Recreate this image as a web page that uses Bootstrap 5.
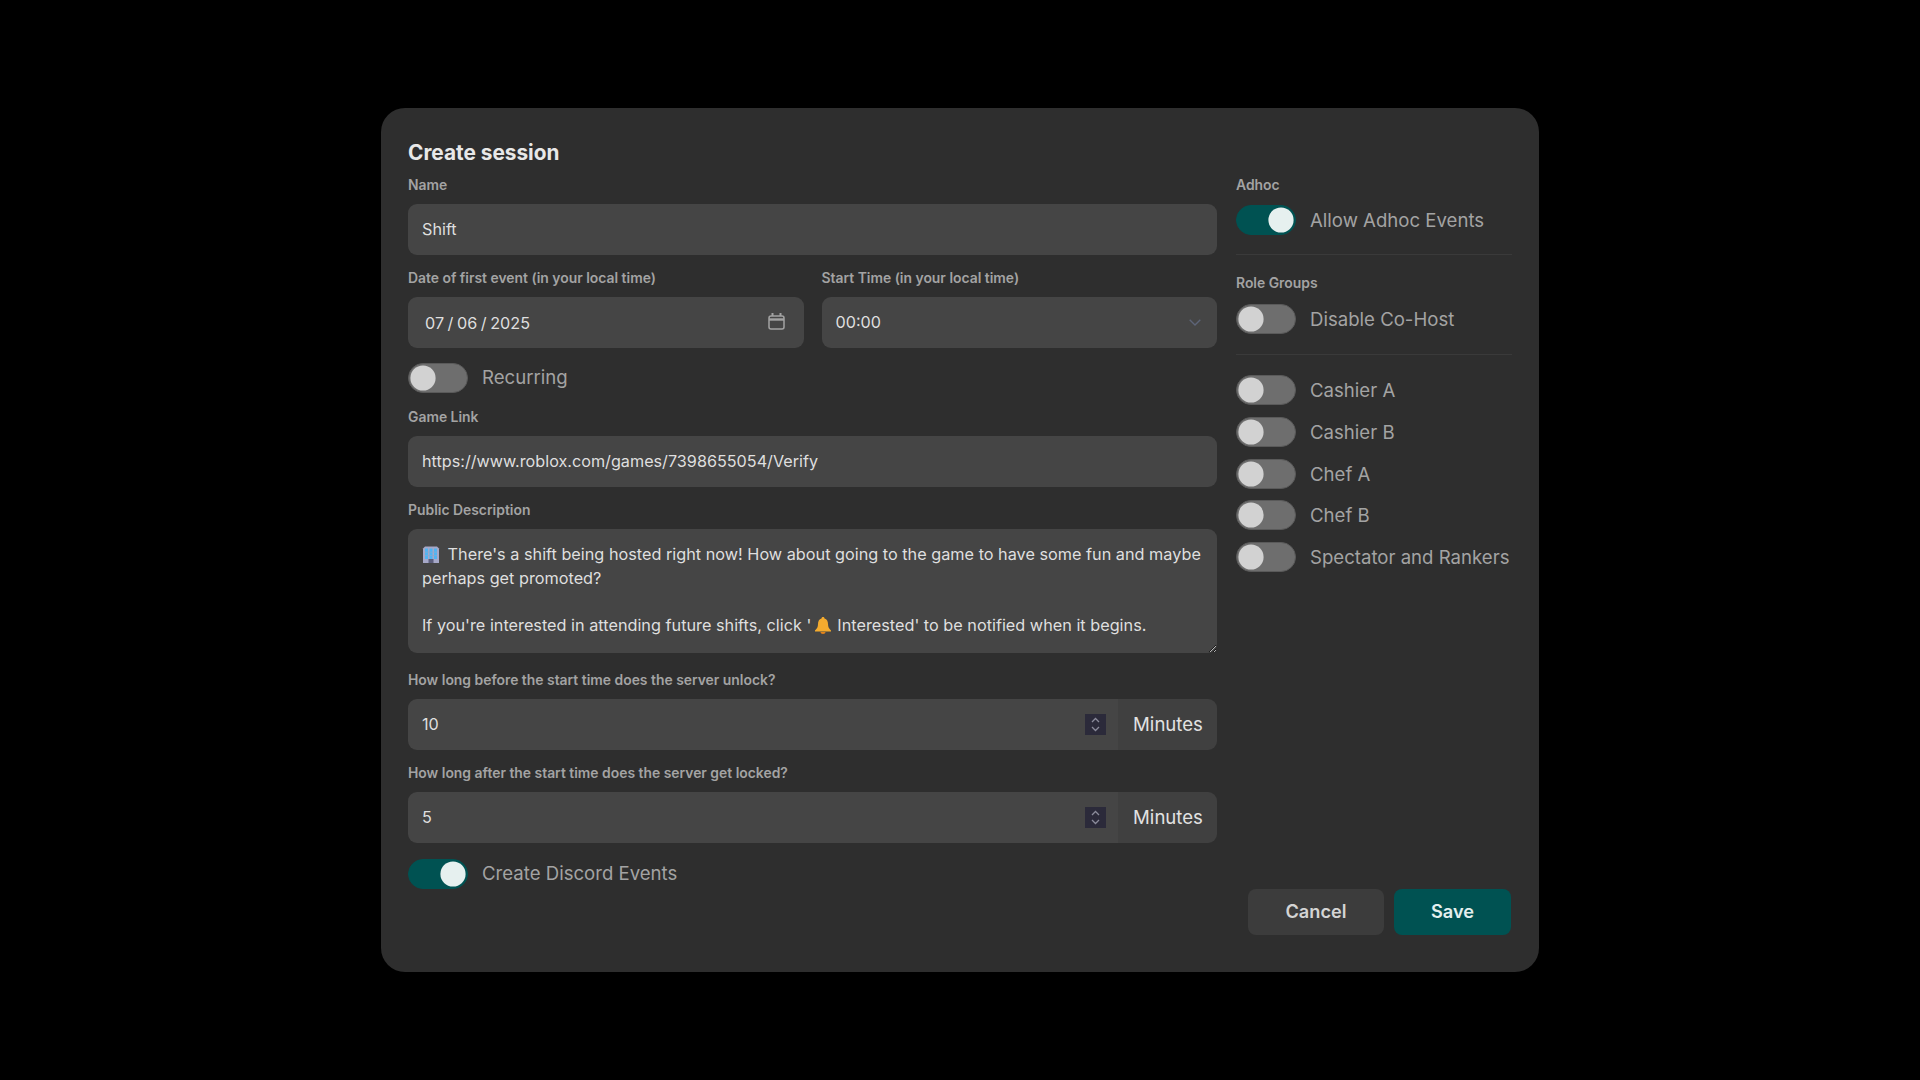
<!DOCTYPE html>
<html lang="en">
<head>
<meta charset="utf-8">
<title>Create session</title>
<link rel="stylesheet" href="https://cdn.jsdelivr.net/npm/bootstrap@5.3.0/dist/css/bootstrap.min.css">
<style>
html,body{height:100%}
body{background:#000;font-family:Inter,"Liberation Sans",sans-serif;color:#e2e2e2}
.sess-shell{min-height:100vh}
.sess-modal{width:1158px;height:864px;background:#2e2e2e;border-radius:24px;padding:31px 27px 36px}
.sess-title{font-size:20.8px;line-height:28px;font-weight:700;color:#e8e8e8;margin:0 0 8px}
.sess-main{width:809px}
.sess-side{width:276px}
.sess-half{flex:1 1 0}
.sess-label{display:block;font-size:13.9px;line-height:20px;font-weight:600;color:#a3a3a3;margin:0 0 9px}
.sess-label-side{margin-bottom:10px}
.sess-label-role{margin-bottom:11px}
.sess-field{margin-bottom:13px}
.sess-modal .form-control,.sess-modal .form-select{height:51px;background-color:#454545;border:0;border-radius:9px;color:#dfdfdf;font-size:16.2px;line-height:23px;padding:0 14px;box-shadow:none}
.sess-modal input.form-control{padding-bottom:2px}
.sess-modal .form-select{background-image:url("data:image/svg+xml,%3csvg xmlns='http://www.w3.org/2000/svg' viewBox='0 0 12 7'%3e%3cpath fill='none' stroke='%235d6478' stroke-width='1.4' d='M.7.7 6 6 11.3.7'/%3e%3c/svg%3e");background-size:12px 7px;background-position:right 16px center}
.sess-modal input.sess-date{padding-left:17px;padding-bottom:0;word-spacing:-1px}
.sess-cal{position:absolute;right:19px;top:16px;width:17px;height:17px}
.sess-descr{height:124px!important;padding:14px 14px 0!important;overflow:hidden;resize:vertical;white-space:normal;font-size:16.25px!important;line-height:23.5px!important}
.sess-descr svg{vertical-align:-3px}
.sess-building{margin-right:3px}
.sess-bell{margin:0 5px 0 3px}
.sess-descr p{margin:0}
.sess-gap{height:23.5px}
.sess-modal .input-group-text{width:100px;justify-content:center;background:#404040;border:0;color:#e2e2e2;font-size:18.6px;padding:0 0 0 2px;border-radius:0 9px 9px 0}
.sess-num{border-radius:9px 0 0 9px!important}
.sess-spin{position:absolute;right:12px;top:15px;width:21px;height:21px;background:#2b2a3a}
.sess-modal .form-switch{display:flex;align-items:center;gap:14px;min-height:30px;margin:0;padding:0}
.sess-modal .form-switch .form-check-input{width:60px;height:30px;margin:0;float:none;flex:none;background-color:#6e6e6e;border:1px solid #5a5a5a;border-radius:15px;box-shadow:none;background-size:auto 100%;background-image:url("data:image/svg+xml,%3csvg xmlns='http://www.w3.org/2000/svg' viewBox='-4 -4 8 8'%3e%3ccircle r='3.6' fill='%23d2d2d2'/%3e%3c/svg%3e")}
.sess-modal .form-switch .form-check-input:checked{background-color:#005252;border-color:#005252;background-image:url("data:image/svg+xml,%3csvg xmlns='http://www.w3.org/2000/svg' viewBox='-4 -4 8 8'%3e%3ccircle r='3.6' fill='%23e6f0ef'/%3e%3c/svg%3e")}
.sess-modal .form-check-label{font-size:18.6px;line-height:30px;color:#a3a3a3;opacity:1!important}
.sess-modal .sess-lift{margin-top:-2px}
.sess-switch-main{margin-top:15px!important;margin-bottom:14px!important}
.sess-rule{margin:0;border-color:#3a3a3a;opacity:1}
.sess-rule-a{margin:19px 0 18px}
.sess-rule-b{margin:20px 0 20px}
.sess-roles{gap:11.8px}
.sess-col-gap{gap:19px}
.sess-half-gap{gap:18px}
.sess-after-descr{margin-bottom:17px}
.sess-btn{height:46px;font-size:18.2px;font-weight:600;border:0;border-radius:8px;padding:0}
.sess-cancel{width:136px;background:#3c3c3c;color:#d4d4d4}
.sess-save{width:117px;background:#005252;color:#e3efee}
.sess-foot{gap:10px;margin-top:0;padding-right:1px}
</style>
</head>
<body>
<div class="sess-shell d-flex align-items-center justify-content-center">
<div class="sess-modal d-flex flex-column">
  <h1 class="sess-title">Create session</h1>
  <div class="d-flex sess-col-gap">
    <div class="sess-main">
      <div class="sess-field">
        <label class="sess-label">Name</label>
        <input class="form-control" type="text" value="Shift">
      </div>
      <div class="d-flex sess-half-gap">
        <div class="sess-half">
          <label class="sess-label">Date of first event (in your local time)</label>
          <div class="position-relative">
            <input class="form-control sess-date" type="text" value="07 / 06 / 2025">
            <svg class="sess-cal" viewBox="0 0 17 17" fill="none" stroke="#a2a2a2" stroke-width="1.5"><rect x="1" y="3" width="15" height="13" rx="2"/><path d="M1 6.500h15" stroke-width="2.400"/><path d="M4.500 0v3M12.500 0v3" stroke-width="2"/></svg>
          </div>
        </div>
        <div class="sess-half">
          <label class="sess-label">Start Time (in your local time)</label>
          <select class="form-select"><option>00:00</option></select>
        </div>
      </div>
      <div class="form-check form-switch sess-switch-main">
        <input class="form-check-input" type="checkbox" role="switch" id="s1">
        <label class="form-check-label sess-lift" for="s1">Recurring</label>
      </div>
      <div class="sess-field">
        <label class="sess-label">Game Link</label>
        <input class="form-control" type="text" value="https://www.roblox.com/games/7398655054/Verify">
      </div>
      <div class="sess-after-descr">
        <label class="sess-label">Public Description</label>
        <div class="form-control sess-descr">
          <p><svg class="sess-building" width="18" height="17" viewBox="0 0 18 17"><path fill="#a6a8c8" d="M1 2.500 3 .5h12l2 2V17H1z"/><path fill="#50b4f2" d="M3 2.500h3V13H3zM7.500 2.500h3V13h-3zM12 2.500h3V13h-3z"/><path fill="#85a9cf" d="M3 5.700h12v.7H3zM3 9.200h12v.7H3z"/><path fill="#5c5e7c" d="M6.500 13h5v4h-5z"/></svg> There's a shift being hosted right now! How about going to the game to have some fun and maybe perhaps get promoted?</p>
          <div class="sess-gap"></div>
          <p>If you're interested in attending future shifts, click '<svg class="sess-bell" width="18" height="17" viewBox="0 0 18 17"><path fill="#f4ab2f" d="M9 0c1 0 1.500.700 1.500 1.500C13 2.300 14 4.500 14 7c0 3 1 4.500 3 6.500V14.500H1V13.500C3 11.500 4 10 4 7c0-2.500 1-4.700 3.500-5.500C7.500.700 8 0 9 0z"/><path fill="#e2831b" d="M6.500 15h5c0 1.200-1.100 2-2.500 2s-2.500-.800-2.500-2z"/></svg>Interested' to be notified when it begins.</p>
        </div>
      </div>
      <div class="sess-field">
        <label class="sess-label">How long before the start time does the server unlock?</label>
        <div class="input-group">
          <div class="position-relative flex-grow-1">
            <input class="form-control sess-num" type="text" value="10">
            <svg class="sess-spin" viewBox="0 0 21 21" fill="none" stroke="#8b8b9b" stroke-width="1.300"><path d="M7 8l3.500-3.500L14 8M7 13l3.500 3.500L14 13"/></svg>
          </div>
          <span class="input-group-text">Minutes</span>
        </div>
      </div>
      <div>
        <label class="sess-label">How long after the start time does the server get locked?</label>
        <div class="input-group">
          <div class="position-relative flex-grow-1">
            <input class="form-control sess-num" type="text" value="5">
            <svg class="sess-spin" viewBox="0 0 21 21" fill="none" stroke="#8b8b9b" stroke-width="1.300"><path d="M7 8l3.500-3.500L14 8M7 13l3.500 3.500L14 13"/></svg>
          </div>
          <span class="input-group-text">Minutes</span>
        </div>
      </div>
      <div class="form-check form-switch mt-3">
        <input class="form-check-input" type="checkbox" role="switch" id="s2" checked>
        <label class="form-check-label sess-lift" for="s2">Create Discord Events</label>
      </div>
    </div>
    <div class="sess-side">
      <label class="sess-label sess-label-side">Adhoc</label>
      <div class="form-check form-switch">
        <input class="form-check-input" type="checkbox" role="switch" id="a1" checked>
        <label class="form-check-label" for="a1">Allow Adhoc Events</label>
      </div>
      <hr class="sess-rule sess-rule-a">
      <label class="sess-label sess-label-role">Role Groups</label>
      <div class="form-check form-switch">
        <input class="form-check-input" type="checkbox" role="switch" id="a2">
        <label class="form-check-label" for="a2">Disable Co-Host</label>
      </div>
      <hr class="sess-rule sess-rule-b">
      <div class="d-flex flex-column sess-roles">
        <div class="form-check form-switch"><input class="form-check-input" type="checkbox" role="switch" id="r1"><label class="form-check-label" for="r1">Cashier A</label></div>
        <div class="form-check form-switch"><input class="form-check-input" type="checkbox" role="switch" id="r2"><label class="form-check-label" for="r2">Cashier B</label></div>
        <div class="form-check form-switch"><input class="form-check-input" type="checkbox" role="switch" id="r3"><label class="form-check-label" for="r3">Chef A</label></div>
        <div class="form-check form-switch"><input class="form-check-input" type="checkbox" role="switch" id="r4"><label class="form-check-label" for="r4">Chef B</label></div>
        <div class="form-check form-switch"><input class="form-check-input" type="checkbox" role="switch" id="r5"><label class="form-check-label" for="r5">Spectator and Rankers</label></div>
      </div>
    </div>
  </div>
  <div class="d-flex justify-content-end sess-foot">
    <button class="btn sess-btn sess-cancel" type="button">Cancel</button>
    <button class="btn sess-btn sess-save" type="button">Save</button>
  </div>
</div>
</div>
<script src="https://cdn.jsdelivr.net/npm/bootstrap@5.3.0/dist/js/bootstrap.bundle.min.js"></script>
</body>
</html>
